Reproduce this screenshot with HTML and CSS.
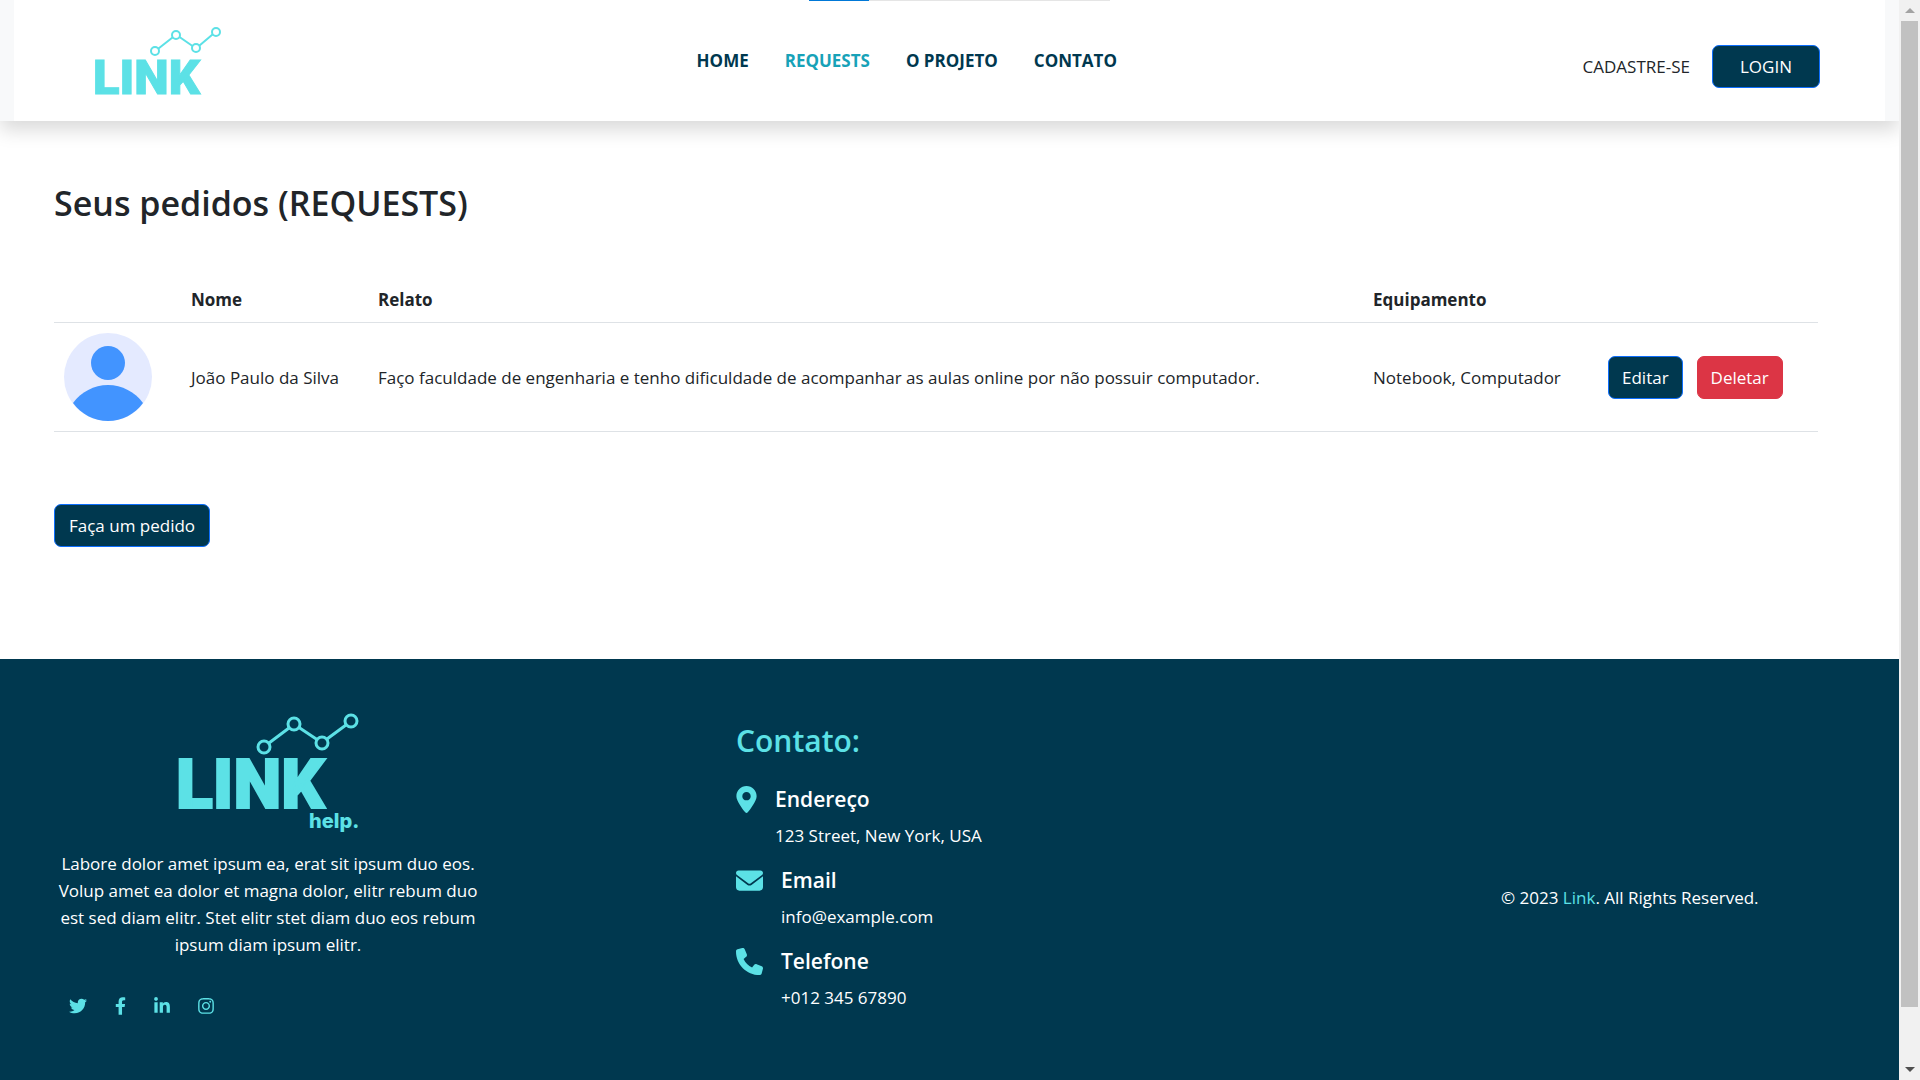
FILE: index.html
```html
<!DOCTYPE html>
<html lang="pt-BR">
<head>
  <meta charset="utf-8">
  <meta name="viewport" content="width=device-width, initial-scale=1">
  <title>Link - Requests</title>
  <link rel="stylesheet" href="styles.css">
</head>
<body>
  <div class="window">
    <div class="page">
      <header class="header">
        <div class="progress"><div class="progress-bar"></div></div>
        <div class="navbar">
          <a class="brand" href="#" aria-label="Link">
            <svg class="logo-small" viewBox="-4 -10 140 90" width="140" height="90">
              <g fill="none" stroke="#5ce1e6" stroke-width="2">
                <path d="M63.500 22.500 77.500 11.500M84.500 11 97.500 20M104.500 19.500 117.500 8.500"/>
                <circle cx="60" cy="25" r="4"/><circle cx="81" cy="9" r="4"/><circle cx="101" cy="22" r="4"/><circle cx="121" cy="6" r="4"/>
              </g>
              <text class="logo-word" x="-2" y="68" font-size="49" stroke-width="1">LINK</text>
            </svg>
          </a>
          <nav class="nav">
            <a href="#">HOME</a>
            <a class="active" href="#">REQUESTS</a>
            <a href="#">O PROJETO</a>
            <a href="#">CONTATO</a>
          </nav>
          <div class="account">
            <a class="signup" href="#">CADASTRE-SE</a>
            <button class="btn btn-login" type="button">LOGIN</button>
          </div>
        </div>
      </header>

      <main class="main">
        <h1>Seus pedidos (REQUESTS)</h1>
        <table class="requests">
          <colgroup>
            <col class="col-photo"><col class="col-name"><col><col class="col-equipment"><col class="col-actions">
          </colgroup>
          <thead>
            <tr><th></th><th scope="col">Nome</th><th scope="col">Relato</th><th scope="col">Equipamento</th><th></th></tr>
          </thead>
          <tbody>
            <tr>
              <td>
                <svg class="avatar" viewBox="0 0 88 88" width="88" height="88" aria-hidden="true">
                  <circle cx="44" cy="44" r="44" fill="#e4eaff"/>
                  <circle cx="44" cy="30" r="17" fill="#4294ff"/>
                  <path d="M9 70C17 59 30 52 44 52s27 7 35 18C71 81 58 88 44 88S17 81 9 70Z" fill="#4294ff"/>
                </svg>
              </td>
              <td>João Paulo da Silva</td>
              <td>Faço faculdade de engenharia e tenho dificuldade de acompanhar as aulas online por não possuir computador.</td>
              <td>Notebook, Computador</td>
              <td>
                <div class="actions">
                  <button class="btn" type="button">Editar</button>
                  <button class="btn btn-danger" type="button">Deletar</button>
                </div>
              </td>
            </tr>
          </tbody>
        </table>
        <button class="btn" type="button">Faça um pedido</button>
      </main>

      <footer class="footer">
        <section class="about">
          <svg class="logo-large" viewBox="-4 0 190 124" width="190" height="124" role="img" aria-label="Link help">
            <g fill="none" stroke="#5ce1e6" stroke-width="3">
              <path d="M92 30 112 15M122 14.500 140 26.500M150 26 169 12"/>
              <circle cx="87" cy="34" r="6"/><circle cx="117" cy="11" r="6"/><circle cx="145" cy="30" r="6"/><circle cx="174" cy="8" r="6"/>
            </g>
            <text class="logo-word" x="-1" y="95" font-size="68" stroke-width="2">LINK</text>
            <text class="logo-help" x="132" y="115" font-size="20">help.</text>
          </svg>
          <p>Labore dolor amet ipsum ea, erat sit ipsum duo eos. Volup amet ea dolor et magna dolor, elitr rebum duo est sed diam elitr. Stet elitr stet diam duo eos rebum ipsum diam ipsum elitr.</p>
          <div class="social">
            <a href="#" aria-label="Twitter"><svg viewBox="0 0 512 512" width="18" height="18"><path d="M459.4 151.7c.3 4.500.3 9.100.3 13.600 0 138.700-105.600 298.600-298.600 298.600-59.500 0-114.700-17.200-161.100-47.100 8.400 1 16.600 1.300 25.300 1.300 49.100 0 94.200-16.600 130.300-44.800-46.100-1-84.800-31.200-98.100-72.800 6.500 1 13 1.600 19.800 1.600 9.400 0 18.800-1.300 27.600-3.600-48.100-9.700-84.100-52-84.100-103v-1.300c14 7.800 30.200 12.700 47.400 13.300-28.300-18.800-46.800-51-46.800-87.400 0-19.500 5.200-37.400 14.300-53 51.700 63.700 129.300 105.300 216.400 109.800-1.600-7.800-2.600-15.900-2.600-24 0-57.800 46.800-104.900 104.900-104.900 30.200 0 57.500 12.700 76.700 33.100 23.700-4.500 46.500-13.300 66.600-25.300-7.800 24.400-24.400 44.800-46.100 57.800 21.100-2.300 41.600-8.100 60.400-16.200-14.300 20.800-32.200 39.300-52.600 54.300z"/></svg></a>
            <a href="#" aria-label="Facebook"><svg viewBox="0 0 320 512" width="11" height="18"><path d="m279.100 288 14.200-92.700h-88.900v-60.100c0-25.300 12.400-50.100 52.200-50.100H297V6.300S260.400 0 225.400 0C152.200 0 104.300 44.400 104.300 124.700v70.600H22.900V288h81.400v224h100.200V288z"/></svg></a>
            <a href="#" aria-label="LinkedIn"><svg viewBox="0 0 448 512" width="16" height="18"><path d="M100.300 448H7.400V148.900h92.900zM53.800 108.100C24.100 108.100 0 83.500 0 53.800a53.800 53.800 0 0 1 107.600 0c0 29.700-24.100 54.300-53.800 54.300zM447.900 448h-92.700V302.400c0-34.700-.7-79.200-48.300-79.200-48.300 0-55.700 37.700-55.700 76.700V448h-92.800V148.900h89.100v40.800h1.300c12.400-23.500 42.700-48.300 87.900-48.300 94 0 111.300 61.900 111.300 142.300V448z"/></svg></a>
            <a href="#" aria-label="Instagram"><svg viewBox="0 0 448 512" width="16" height="18"><path d="M224.100 141c-63.600 0-114.900 51.300-114.900 114.900s51.300 114.900 114.900 114.900S339 319.500 339 255.900 287.700 141 224.100 141zm0 189.600c-41.100 0-74.700-33.500-74.700-74.700s33.500-74.700 74.700-74.700 74.700 33.500 74.700 74.700-33.600 74.700-74.700 74.700zm146.400-194.300c0 14.900-12 26.800-26.800 26.800-14.900 0-26.800-12-26.800-26.800s12-26.800 26.800-26.800 26.800 12 26.800 26.800zm76.100 27.200c-1.700-35.900-9.900-67.700-36.200-93.900-26.200-26.200-58-34.400-93.900-36.200-37-2.100-147.900-2.100-184.900 0-35.800 1.700-67.600 9.900-93.900 36.100s-34.400 58-36.200 93.900c-2.100 37-2.100 147.900 0 184.900 1.700 35.900 9.900 67.700 36.200 93.900s58 34.400 93.900 36.200c37 2.100 147.900 2.100 184.900 0 35.900-1.700 67.700-9.900 93.900-36.200 26.200-26.200 34.400-58 36.200-93.900 2.100-37 2.100-147.800 0-184.800zM398.800 388c-7.800 19.600-22.900 34.700-42.600 42.600-29.500 11.700-99.500 9-132.100 9s-102.700 2.600-132.100-9c-19.600-7.800-34.700-22.900-42.600-42.600-11.700-29.500-9-99.500-9-132.100s-2.600-102.700 9-132.100c7.800-19.600 22.900-34.700 42.600-42.600 29.500-11.700 99.500-9 132.100-9s102.700-2.600 132.100 9c19.600 7.800 34.700 22.900 42.600 42.600 11.700 29.500 9 99.500 9 132.100s2.700 102.700-9 132.100z"/></svg></a>
          </div>
        </section>

        <section class="contact">
          <h2>Contato:</h2>
          <div class="contact-item">
            <svg viewBox="0 0 384 512" width="21" height="27"><path d="M215.700 499.200C267 435 384 279.400 384 192 384 86 298 0 192 0S0 86 0 192c0 87.400 117 243 168.300 307.200 12.300 15.300 35.100 15.300 47.400 0zM192 272c-44.200 0-80-35.800-80-80s35.800-80 80-80 80 35.800 80 80-35.800 80-80 80z"/></svg>
            <div><h3>Endereço</h3><p>123 Street, New York, USA</p></div>
          </div>
          <div class="contact-item">
            <svg viewBox="0 0 512 512" width="27" height="27"><path d="M48 64C21.500 64 0 85.500 0 112c0 15.100 7.100 29.300 19.200 38.400l217.600 163.200c11.400 8.500 27 8.500 38.400 0l217.600-163.200c12.100-9.100 19.200-23.300 19.200-38.400 0-26.500-21.500-48-48-48H48zM0 176v208c0 35.300 28.700 64 64 64h384c35.300 0 64-28.700 64-64V176L294.400 339.200c-22.800 17.100-54 17.100-76.800 0z"/></svg>
            <div><h3>Email</h3><p>info@example.com</p></div>
          </div>
          <div class="contact-item">
            <svg viewBox="0 0 512 512" width="27" height="27"><path d="M164.900 24.600c-7.700-18.600-28-28.500-47.400-23.200l-88 24C12.100 30.200 0 46 0 64c0 247.400 200.600 448 448 448 18 0 33.800-12.100 38.600-29.500l24-88c5.300-19.400-4.600-39.700-23.200-47.400l-96-40c-16.300-6.800-35.200-2.100-46.300 11.600L304.700 368C234.300 334.700 177.300 277.700 144 207.300l49.300-40.300c13.700-11.200 18.400-30 11.600-46.300z"/></svg>
            <div><h3>Telefone</h3><p>+012 345 67890</p></div>
          </div>
        </section>

        <p class="copyright">© 2023 <a href="#">Link</a>. All Rights Reserved.</p>
      </footer>
    </div>

    <div class="scrollbar" aria-hidden="true">
      <div class="arrow arrow-up"></div>
      <div class="track"><div class="thumb"></div></div>
      <div class="arrow arrow-down"></div>
    </div>
  </div>
</body>
</html>
```
FILE: styles.css
```css
* { box-sizing: border-box; }

body {
  margin: 0;
  font: 17px/27px "Segoe UI", "Open Sans", "Noto Sans", sans-serif;
  color: #212529;
  background: #fff;
}

h1, h2, h3, p { margin: 0; font-weight: 600; }
p { font-weight: 400; }
a { color: inherit; text-decoration: none; }
svg { display: block; flex: none; }

.window { display: flex; height: 100vh; }
.page { flex: 1; min-width: 0; overflow-y: auto; scrollbar-width: none; }

/* Header */
.header {
  position: relative;
  padding: 0 14px;
  background: #f8f9fa;
  box-shadow: 0 9px 18px rgba(0, 0, 0, .15);
}
.progress {
  position: absolute;
  top: 0;
  left: 50%;
  width: 301px;
  height: 1px;
  margin-left: -141px;
  background: #e5e5e5;
}
.progress-bar { width: 20%; height: 100%; background: #0078d7; }
.navbar {
  display: flex;
  justify-content: space-between;
  align-items: center;
  height: 121px;
  padding: 0 65px 0 77px;
  background: #fff;
}
.nav {
  display: flex;
  gap: 36px;
  font-weight: 700;
  color: #00384f;
}
.nav .active { color: #17a2b8; }
.account {
  display: flex;
  align-items: center;
  gap: 22px;
  padding-top: 12px;
}
.logo-word {
  font-family: Roboto, sans-serif;
  font-weight: 900;
  fill: #5ce1e6;
  stroke: #5ce1e6;
}
.logo-help { font-family: Inter, sans-serif; font-weight: 800; fill: #5ce1e6; }

/* Buttons */
.btn {
  height: 43px;
  padding: 0 14px;
  border: 1px solid #0d6efd;
  border-radius: 7px;
  background: #00384f;
  color: #fff;
  font: inherit;
  white-space: nowrap;
}
.btn-login { padding: 0 27px; }
.btn-danger { border-color: #dc3545; background: #dc3545; }

/* Requests */
.main { padding: 60px 81px 112px 54px; }
h1 { font-size: 34px; line-height: 44px; }
.requests {
  width: 100%;
  margin: 48px 0 72px;
  border-collapse: collapse;
  table-layout: fixed;
}
.requests th, .requests td {
  padding: 10px;
  border-bottom: 1px solid #dee2e6;
  text-align: left;
  white-space: nowrap;
}
.requests th { padding: 13px 10px 9px; }
.col-photo { width: 127px; }
.col-name { width: 187px; }
.col-equipment { width: 235px; }
.col-actions { width: 220px; }
.actions { display: flex; gap: 14px; }
.actions .btn { padding: 0 13px; }

/* Footer */
.footer {
  display: grid;
  grid-template-columns: 428px 1fr 318px;
  align-items: center;
  padding: 54px 80px 54px 54px;
  background: #00384f;
  color: #fff;
}
.about { text-align: center; }
.logo-large { margin: 0 auto 13px; }
.social {
  display: flex;
  gap: 28px;
  margin: 39px 0 66px;
  padding-left: 15px;
  fill: #5ce1e6;
}
.contact {
  display: grid;
  gap: 18px;
  margin-left: 254px;
  padding-bottom: 60px;
}
h2 { margin-bottom: 9px; font-size: 30px; line-height: 36px; color: #5ce1e6; }
h3 { margin-bottom: 9px; font-size: 21px; line-height: 27px; }
.contact-item { display: flex; gap: 18px; fill: #5ce1e6; }
.copyright a { color: #5ce1e6; }

/* Scroll bar */
.scrollbar {
  display: flex;
  flex-direction: column;
  width: 21px;
  padding: 0 2px;
  background: #f1f1f1;
}
.arrow { display: flex; justify-content: center; align-items: center; height: 21px; }
.arrow::before { content: ""; border: 5px solid transparent; }
.arrow-up::before { border-top: 0; border-bottom-color: #a3a3a3; }
.arrow-down::before { border-bottom: 0; border-top-color: #505050; }
.track { flex: 1; }
.thumb { height: 95%; background: #c1c1c1; }
```
